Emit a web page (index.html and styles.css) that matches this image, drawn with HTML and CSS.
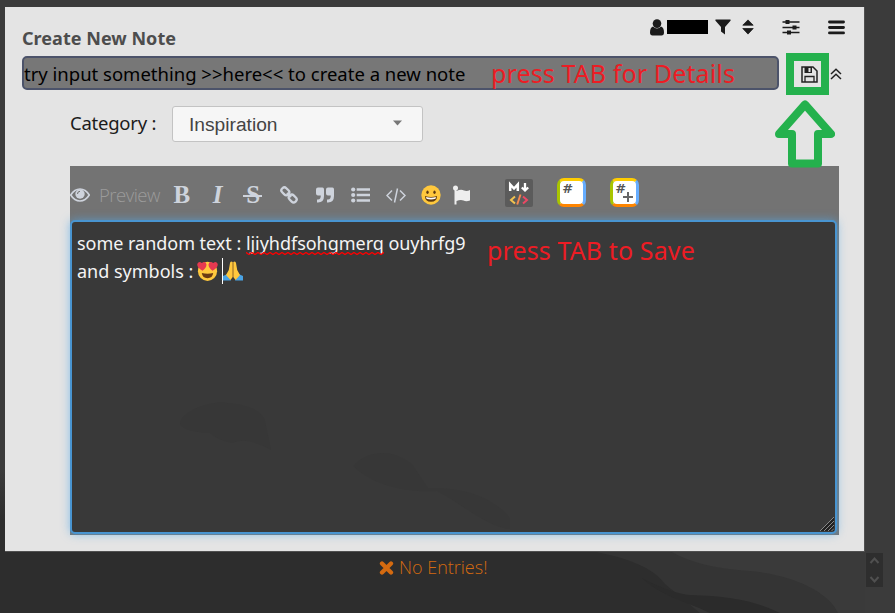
FILE: index.html
```
<!DOCTYPE html>
<html lang="en">
<head>
<meta charset="utf-8">
<title>Create New Note</title>
<link rel="stylesheet" href="styles.css">
</head>
<body>
<svg class="backdrop" viewBox="0 0 895 613" aria-hidden="true">
  <path fill="#343434" d="M590 551C630 558 653 568 665 584L700 613H895V551Z"/>
  <path fill="#3a3a3a" d="M670 551C690 562 710 568 750 571 800 576 830 595 838 613H895V551Z"/>
  <path fill="#3b3b3b" d="M865 0H895V613H865Z"/>
  <path fill="#2b2b2b" d="M642 578C665 590 679 594 690 595 730 596 755 601 780 613H710C690 603 660 596 642 578Z"/>
</svg>
<main class="panel">
  <header class="panel-head">
    <h1 class="title"><span>Create New Note</span></h1>
    <nav class="actions">
      <svg class="i-user" width="14" height="17" viewBox="0 0 14 17"><circle cx="7" cy="4.6" r="4.3"/><path d="M3 7.6Q7 11.6 11 7.600 14 8.500 14 13.500 14 16.500 11.500 16.500H2.500Q0 16.500 0 13.500 0 8.500 3 7.600Z"/></svg>
      <span class="redacted"></span>
      <svg class="i-filter" width="16" height="16" viewBox="0 0 16 16"><path d="M0.700 0.500H15.300Q16 1 15.500 1.800L10 8V15.500L6 12.500V8L.5 1.800Q0 1 .7 .5Z"/></svg>
      <svg class="i-sort" width="12" height="16" viewBox="0 0 12 16"><path d="M6 .9 11.200 6.200H.8ZM6 15.100.8 9.500H11.200Z" stroke="#1b1b1b" stroke-width=".8" stroke-linejoin="round"/></svg>
      <svg class="i-sliders" width="18" height="16" viewBox="0 0 18 16"><path d="M.5 3H17.500M.5 8.500H17.500M.5 13.500H17.500" stroke="#1b1b1b" stroke-width="1.300"/><path d="M3.500 1H7.500V5H3.500ZM10.500 6.500H14.500V10.500H10.500ZM5 11.500H9V15.500H5Z"/></svg>
      <svg class="i-menu" width="17" height="15" viewBox="0 0 17 15"><path d="M1.500 2H15.500M1.500 7.500H15.500M1.500 12.900H15.500" stroke="#1b1b1b" stroke-width="2.900" stroke-linecap="round"/></svg>
    </nav>
  </header>
  <div class="input-row">
    <div class="note-input"><span>try input something &gt;&gt;here&lt;&lt; to create a new note</span></div>
    <svg class="i-save" width="17" height="17" viewBox="0 0 17 17"><path d="M1 1H12L16 5V16H1Z" fill="none" stroke="#222" stroke-width="1.500"/><path d="M3.500 1H11V7H3.500Z"/><path fill="#e4e4e4" d="M7.500 2H9.500V6H7.500Z"/><path d="M4 16V10.500H13V16" fill="none" stroke="#222" stroke-width="1.300"/></svg>
    <svg class="i-up" width="12" height="12" viewBox="0 0 12 12"><path d="M1 6 6 1.300 11 6M1 11 6 6.300 11 11" fill="none" stroke="#222" stroke-width="1.500"/></svg>
  </div>
  <div class="category-row">
    <label class="cat-label"><span>Category :</span></label>
    <div class="select"><span>Inspiration</span><svg width="9" height="6" viewBox="0 0 9 6"><path fill="#777" d="M0 .5H9L4.500 5.500Z"/></svg></div>
  </div>
  <section class="editor">
    <div class="toolbar">
      <svg class="i-eye" width="20" height="14" viewBox="0 0 20 14"><path d="M.7 7Q4.500 1 10 1T19.300 7Q15.500 13 10 13T.7 7Z" fill="none" stroke="#ced3dc" stroke-width="1.700"/><circle cx="10" cy="6" r="4.700"/><path d="M7.500 6A2.600 2.600 0 0 1 10 3.300" fill="none" stroke="#737373"/></svg>
      <span class="preview"><span>Preview</span></span>
      <span class="tool bold">B</span>
      <span class="tool italic">I</span>
      <span class="tool strike">S</span>
      <span class="tool"><svg width="18" height="18" viewBox="0 0 18 18" fill="none" stroke="#ced3dc" stroke-width="2.300"><rect x="-4.200" y="-2.900" width="8.400" height="5.800" rx="2.700" transform="translate(5.300 5.300) rotate(45)"/><rect x="-4.200" y="-2.900" width="8.400" height="5.800" rx="2.700" transform="translate(12.700 12.500) rotate(45)"/><path d="M7 7 11 11"/></svg></span>
      <span class="tool"><svg width="18" height="16" viewBox="0 0 18 16"><path id="q" d="M2 .5H6.500Q8 .5 8 2.500V9Q8 15.500 2 15.500H1V12.500H2Q4.800 12.300 4.800 8.500H2Q0 8.500 0 6.500V2.500Q0 .5 2 .5Z"/><use href="#q" x="10"/></svg></span>
      <span class="tool"><svg width="19" height="16" viewBox="0 0 19 16"><circle cx="2.200" cy="2.500" r="2.100"/><circle cx="2.200" cy="8" r="2.100"/><circle cx="2.200" cy="13.500" r="2.100"/><path d="M5.700 1.200H19V3.800H5.700ZM5.700 6.700H19V9.300H5.700ZM5.700 12.200H19V14.800H5.700Z"/></svg></span>
      <span class="tool"><svg width="20" height="15" viewBox="0 0 20 15" fill="none" stroke="#ced3dc" stroke-width="1.500"><path d="M6 2.500 1 7.500 6 12.500M14 2.500 19 7.500 14 12.500M11.500 .5 8.500 14.500"/></svg></span>
      <svg class="i-smile" width="20" height="20" viewBox="0 0 20 20"><circle cx="10" cy="10" r="9.700" fill="#ffc83d"/><ellipse cx="6.500" cy="7.300" rx="1.200" ry="1.800" fill="#5c3a12"/><ellipse cx="13.500" cy="7.300" rx="1.200" ry="1.800" fill="#5c3a12"/><path fill="#5c3a12" d="M4 11Q10 12.800 16 11 16 16.800 10 16.800T4 11Z"/><path fill="#fff" d="M5 12Q10 13.500 15 12L14.500 13.800Q10 15 5.500 13.800Z"/></svg>
      <svg class="i-flag" width="17" height="20" viewBox="0 0 17 20" fill="#eee"><circle cx="2.500" cy="3" r="2.500"/><path d="M1.500 3H3.500V19.500H1.500ZM3.500 6Q8 4 11 5.500 14 6.500 17 5V15.500Q13 17 10.500 15.500 7.500 14.500 3.500 16Z"/></svg>
      <span class="md"><svg width="28" height="28" viewBox="0 0 28 28" fill="none"><path d="M5.200 12V5.500L9 9.500 12.800 5.500V12" stroke="#fff" stroke-width="2.500"/><path d="M20 4V11M16.800 8.500 20 11.500 23.200 8.500" stroke="#fff" stroke-width="2.300"/><path d="M10 17.500 6 21 10 24.500" stroke="#f3c34f" stroke-width="2"/><path d="M15.500 15.500 12.200 25.500" stroke="#f58a50" stroke-width="1.900"/><path d="M18 17.500 22 21 18 24.500" stroke="#ec4864" stroke-width="2"/></svg></span>
      <span class="hash first"><b>#</b></span>
      <span class="hash"><b>#</b><svg class="plus" width="10" height="10" viewBox="0 0 10 10"><path d="M5 0V10M0 5H10" stroke="#666" stroke-width="2"/></svg></span>
    </div>
    <div class="textarea">
      <p class="line l1"><span>some random text : </span><span class="misspelled">ljiyhdfsohgmerq<svg class="squiggle" width="138" height="3" viewBox="0 0 138 3"><defs><pattern id="w" width="6" height="3" patternUnits="userSpaceOnUse"><path d="M-1.500 .4 0 .4 3 2.600 6 .4 7.500 .4" fill="none" stroke="#f00" stroke-width="1.200"/></pattern></defs><rect width="138" height="3" fill="url(#w)"/></svg></span><span> ouyhrfg9</span></p>
      <p class="line l2"><span>and symbols :</span>
        <svg class="e-heart" width="21" height="20" viewBox="0 0 21 20"><circle cx="10.500" cy="10.300" r="9.600" fill="#ffc83d"/><path fill="#e63950" d="M5.500 9.800Q-.5 6.500.4 2.800 1.800-.5 4.800 2 8.500-.5 9.500 3.500 9.500 7 5.500 9.800ZM15.500 9.800Q21.500 6.500 20.600 2.800 19.200-.5 16.200 2 12.500-.5 11.500 3.500 11.500 7 15.500 9.800Z"/><path fill="#6b3a13" d="M4.800 12Q10.500 13.500 16.200 12 15.500 17.200 10.500 17.200T4.800 12Z"/></svg>
        <i class="caret"></i>
        <svg class="e-pray" width="20" height="20" viewBox="0 0 20 20"><path fill="#4aa3e4" d="M0 15 4.500 13 8 19.500H0ZM20 15 15.500 13 12 19.500H20Z"/><path fill="#ffc83d" d="M9.700 1Q7.500-.5 7 2L5.800 9 3 14 7.500 19 9.700 16ZM10.300 1Q12.500-.5 13 2L14.200 9 17 14 12.500 19 10.300 16Z"/><path d="M10 1.500V16" stroke="#cb8c22" stroke-width=".8"/></svg>
      </p>
      <svg class="ghost" viewBox="0 0 765 311" aria-hidden="true"><path fill="#353535" d="M108 202C108 189 140 178 155 181 180 183 190 190 193 199L199 228Q175 214 160 221 145 218 138 211 112 210 108 202ZM281 244C300 224 325 230 340 242L356 266C400 265 425 280 438 296V307C415 305 390 282 365 269 330 271 300 262 281 244Z"/></svg>
      <svg class="grip" width="14" height="14" viewBox="0 0 14 14"><path fill="#222" d="M14 0V14H0Z"/><path d="M0 14 14 0M4 14 14 4M8 14 14 8M11.500 14 14 11.500" stroke="#888"/></svg>
    </div>
  </section>
</main>
<footer class="empty"><svg width="15" height="14" viewBox="0 0 15 14"><path d="M3 2.500 12 11.500M12 2.500 3 11.500" stroke="#d46a10" stroke-width="4.300" stroke-linecap="round"/></svg><span>No Entries!</span></footer>
<div class="scroll-buttons"><svg width="17" height="34" viewBox="0 0 17 34"><path d="M4.500 10 8.500 5.500 12.500 10M4.500 24 8.500 28.500 12.500 24" fill="none" stroke="#505050" stroke-width="2"/></svg></div>
<div class="note note-details">press TAB for Details</div>
<div class="note note-save">press TAB to Save</div>
<div class="save-frame"></div>
<svg class="arrow" width="60" height="68" viewBox="0 0 60 68"><path d="M30 4.500 56 34H43V63.500H17V34H4Z" fill="none" stroke="#24b14d" stroke-width="8" stroke-linejoin="round"/></svg>
</body>
</html>
```
FILE: styles.css
```
* { box-sizing: border-box; }
body {
  margin: 0;
  width: 895px;
  height: 613px;
  overflow: hidden;
  position: relative;
  isolation: isolate;
  padding-top: 7px;
  background: linear-gradient(#3b3b3b 0 470px, #2d2d2d 520px);
  font-family: "Noto Sans", sans-serif;
  color: #1b1b1b;
}
svg { display: block; flex: none; }
.backdrop { position: absolute; left: 0; top: 0; width: 895px; height: 613px; z-index: -1; }
.panel {
  margin-left: 5px;
  width: 860px;
  height: 545px;
  background: #e4e4e4;
  border: solid #505050;
  border-width: 0 1px 1px 0;
}
.panel-head { display: flex; justify-content: space-between; height: 49px; padding-left: 17px; }
.title { margin: 18px 0 0; font-size: 18px; line-height: 26px; font-weight: 700; color: #4d4d4d; white-space: nowrap; }
.title span { letter-spacing: 0.03px; }
.actions { display: flex; align-items: center; height: 40px; padding-right: 19px; fill: #1b1b1b; }
.redacted { width: 41px; height: 14px; background: #000; margin: 0 7px 0 3px; }
.i-sort { margin-left: 11px; }
.i-sliders { margin-left: 28px; }
.i-menu { margin-left: 28px; }
.input-row { display: flex; align-items: center; height: 34px; padding-left: 17px; fill: #222; }
.note-input {
  width: 757px;
  height: 34px;
  border: 2px solid #4c536a;
  border-radius: 5px;
  background: #777;
  font-size: 18.500px;
  line-height: 32px;
  color: #000;
  white-space: nowrap;
}
.note-input span { letter-spacing: 0; }
.i-save { margin: 2px 0 0 22px; }
.i-up { margin: 2px 0 0 12px; }
.category-row { display: flex; height: 76px; padding: 16px 0 0 65px; }
.cat-label { width: 102px; font-size: 18.500px; line-height: 33px; letter-spacing: -0.25px; white-space: nowrap; }
.select {
  display: flex;
  align-items: center;
  justify-content: space-between;
  width: 251px;
  height: 36px;
  padding: 2px 20px 0 16px;
  border: 1px solid #c3c3c3;
  border-radius: 3px;
  background: #f6f6f6;
  font: 19.200px/34px "Liberation Sans", sans-serif;
  color: #444;
}
.select svg { margin-bottom: 4px; }
.editor { margin-left: 65px; width: 769px; height: 369px; background: #737373; }
.toolbar { display: flex; align-items: center; height: 54px; padding-top: 4px; fill: #ced3dc; }
.preview { width: 65px; margin-left: 9px; font: 300 18.500px/26px "Open Sans", sans-serif; letter-spacing: -0.5px; color: #9b9b9b; white-space: nowrap; }
.tool { display: flex; align-items: center; justify-content: center; width: 35.700px; height: 28px; font: 700 25px/28px "Liberation Serif", serif; color: #ced3dc; }
.italic { font-style: italic; }
.strike { position: relative; }
.strike::after { content: ""; position: absolute; left: 8px; top: 14px; width: 19px; height: 2px; background: #ced3dc; }
.i-smile { margin-left: 7px; }
.i-flag { margin: 0 0 0 12px; }
.md { width: 28px; height: 28px; margin: -5px 0 0 35.500px; border-radius: 2px; background: #5b5b5b; }
.hash {
  position: relative;
  width: 29px;
  height: 29px;
  margin: -5px 0 0 24px;
  background: #fff;
  border: 3px solid;
  border-color: #ffcd00 #66adff #ff8500 #a9c500;
  border-radius: 7px;
  font-family: "DejaVu Sans", sans-serif;
  color: #555;
}
.hash b { display: block; font-size: 13px; line-height: 16px; padding-left: 2px; font-weight: 700; }
.plus { position: absolute; left: 10px; top: 11px; }
.textarea {
  position: relative;
  width: 767px;
  height: 314px;
  padding: 7px 5px;
  border: 2px solid #4995d1;
  border-radius: 5px;
  background: #393939;
  box-shadow: 0 0 10px rgba(81, 167, 232, .65);
  color: #f4f4f4;
}
.line { display: flex; align-items: center; margin: 0; height: 28px; font-size: 18px; white-space: pre; }
.l1 { letter-spacing: -0.03px; }
.misspelled { position: relative; }
.squiggle { position: absolute; left: 0; bottom: 0; }
.e-heart { margin-left: 4px; }
.caret { width: 1px; height: 26px; margin-left: 4px; background: #fff; }
.ghost { position: absolute; left: 0; top: 0; width: 765px; height: 311px; opacity: .4; }
.grip { position: absolute; right: 1px; bottom: 1px; }
.empty { display: flex; align-items: center; gap: 5px; margin-left: 379px; height: 31px; font: 300 18px/31px "Open Sans", sans-serif; color: #d46a10; }
.scroll-buttons { position: absolute; left: 866px; top: 553px; width: 17px; height: 34px; background: #2e2e2e; }
.note { position: absolute; color: #ed1c24; font-size: 25px; line-height: 34px; letter-spacing: 0.12px; white-space: nowrap; }
.note-details { left: 491px; top: 56px; }
.note-save { left: 487px; top: 233px; }
.save-frame { position: absolute; left: 786px; top: 53px; width: 43px; height: 42px; border: 8px solid #24b14d; }
.arrow { position: absolute; left: 775px; top: 100px; }
```
